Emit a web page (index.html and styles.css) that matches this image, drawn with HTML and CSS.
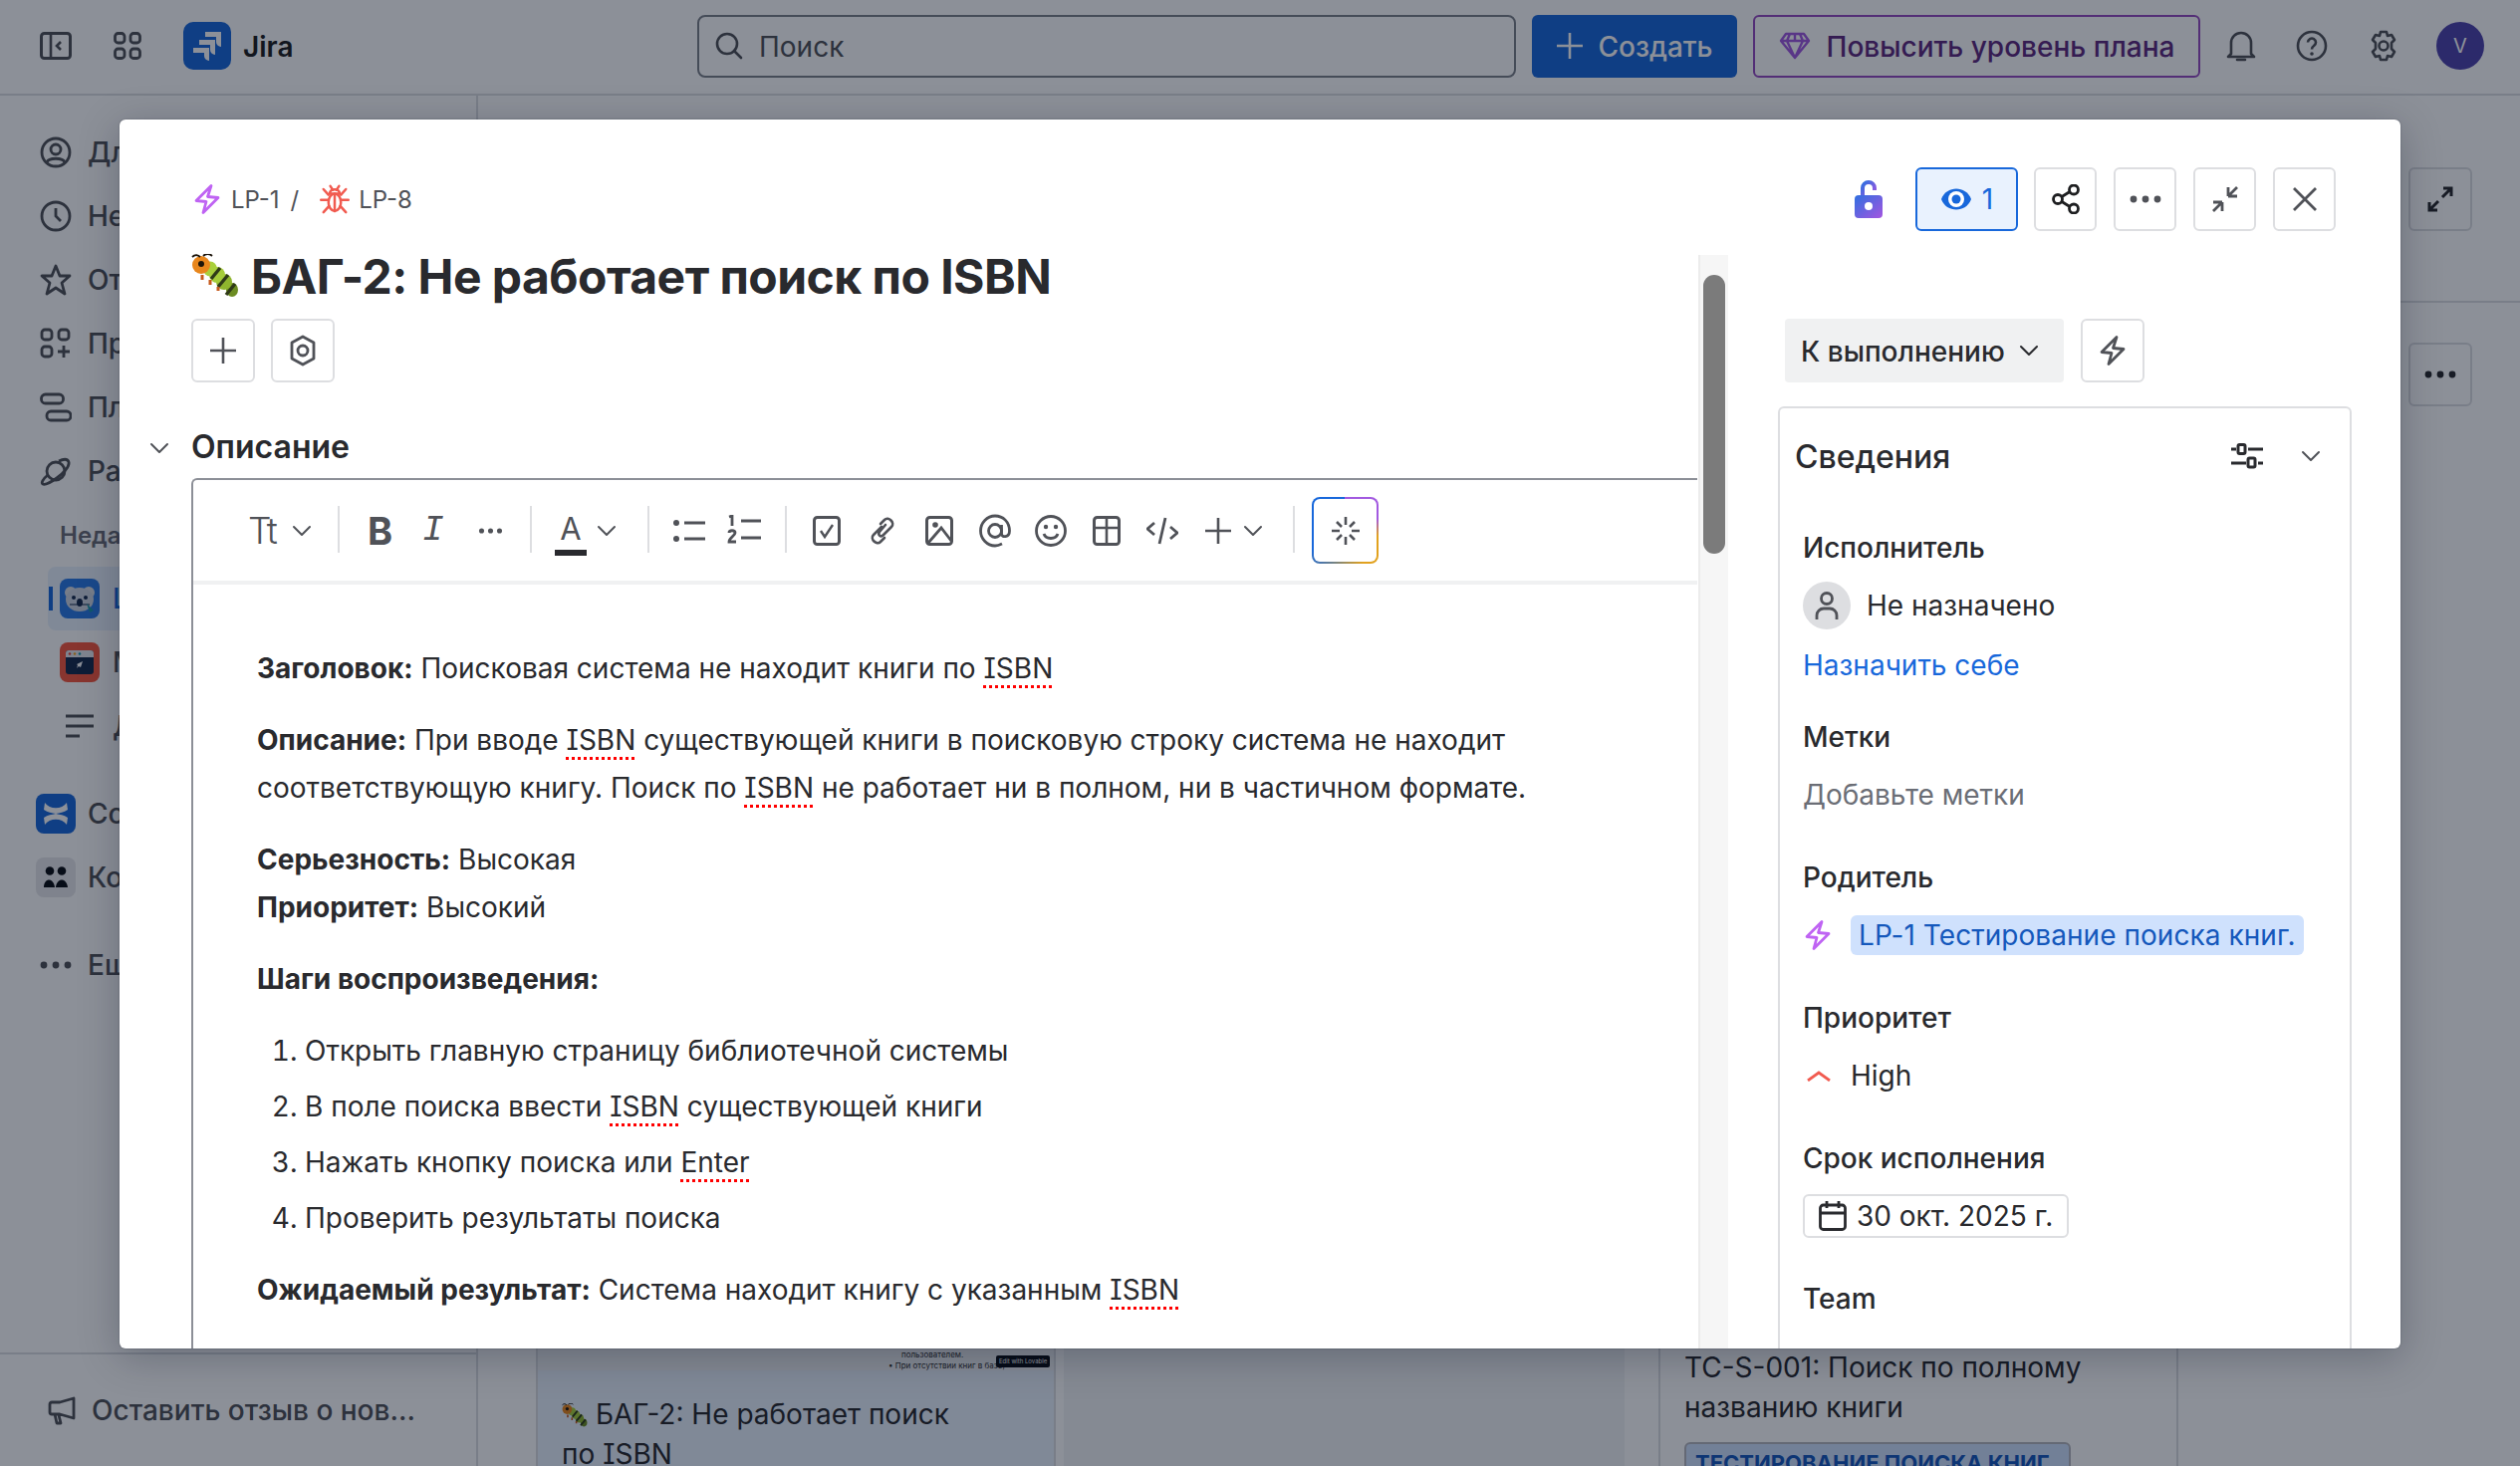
FILE: index.html
```html
<!DOCTYPE html>
<html lang="ru">
<head>
<meta charset="utf-8">
<title>Jira</title>
<link rel="stylesheet" href="styles.css">
</head>
<body>
<svg class="defs" width="0" height="0" aria-hidden="true">
  <defs>
    <symbol id="bolt" viewBox="0 0 26 32"><path d="M17 2.500 13.500 13.500 24 14.500 9 29.500 12 18.500 2 17.500z" fill="none" stroke="currentColor" stroke-width="2.800" stroke-linejoin="round"/></symbol>
    <symbol id="chev" viewBox="0 0 20 12"><path d="M2 2l8 8 8-8" fill="none" stroke="currentColor" stroke-width="2" stroke-linecap="round" stroke-linejoin="round"/></symbol>
    <symbol id="plus" viewBox="0 0 28 28"><path d="M14 1v26M1 14h26" fill="none" stroke="currentColor" stroke-width="2.600"/></symbol>
    <symbol id="dots" viewBox="0 0 32 8"><circle cx="4" cy="4" r="3.400" fill="currentColor"/><circle cx="16" cy="4" r="3.400" fill="currentColor"/><circle cx="28" cy="4" r="3.400" fill="currentColor"/></symbol>
    <symbol id="bug" viewBox="0 0 48 48">
      <g fill="none" stroke="currentColor" stroke-width="4" stroke-linecap="round" stroke-linejoin="round">
        <path d="M17 3l4 6M31 3l-4 6"/>
        <path d="M16 15c0-9 16-9 16 0z"/>
        <ellipse cx="24" cy="29" rx="10" ry="14"/>
        <path d="M24 15v28"/>
        <path d="M14 25H2M34 25h12M15 35L6 45M33 35l9 10M14 17L6 8M34 17l8-9"/>
      </g>
    </symbol>
    <symbol id="caterpillar" viewBox="0 0 48 44">
      <ellipse cx="41" cy="36" rx="6" ry="7" fill="#6c8c22"/>
      <ellipse cx="33" cy="28" rx="8" ry="8" fill="#8fb52e"/>
      <ellipse cx="26" cy="21" rx="8" ry="8" fill="#a5cc3a"/>
      <ellipse cx="19" cy="15" rx="7" ry="7.500" fill="#a9d03c"/>
      <path d="M37 21L27 33M29 14L20 25M44 30L35 41" stroke="#2f3a18" stroke-width="3.400"/>
      <circle cx="10" cy="11" r="9" fill="#e8861c"/>
      <circle cx="10" cy="10" r="3" fill="#1c140a"/>
      <path d="M1 3c3-3 6-2 8 0M12 2c3-3 7-2 9 0" fill="none" stroke="#1c140a" stroke-width="1.800"/>
      <path d="M11 21v5M19 26v5M27 33v4" stroke="#c65a1c" stroke-width="3"/>
    </symbol>
  </defs>
</svg>

<div class="app">
  <header class="topbar">
    <button class="tb-icon"><svg width="32" height="28" viewBox="0 0 32 28"><rect x="1.500" y="1.500" width="29" height="25" rx="3" fill="none" stroke="currentColor" stroke-width="3"/><path d="M11 2v24M21 10l-4 4 4 4" fill="none" stroke="currentColor" stroke-width="2.600"/></svg></button>
    <button class="tb-icon tb-apps"><svg width="28" height="28" viewBox="0 0 28 28"><g fill="none" stroke="currentColor" stroke-width="2.800"><rect x="1.500" y="1.500" width="9.500" height="9.500" rx="3"/><rect x="17" y="1.500" width="9.500" height="9.500" rx="3"/><rect x="1.500" y="17" width="9.500" height="9.500" rx="3"/><rect x="17" y="17" width="9.500" height="9.500" rx="3"/></g></svg></button>
    <div class="logo-box">
      <svg width="30" height="30" viewBox="0 0 30 30"><path d="M13 1h16v15a5 5 0 0 1-5-5V6H13z M7 9h16v15a5 5 0 0 1-5-5v-5H7z M1 17h16v13a5 5 0 0 1-5-5v-3H1z" fill="#fff"/></svg>
    </div>
    <span class="logo-text">Jira</span>
    <div class="search">
      <svg width="28" height="28" viewBox="0 0 28 28"><circle cx="12" cy="12" r="10" fill="none" stroke="currentColor" stroke-width="2.600"/><path d="M19 19l7 7" stroke="currentColor" stroke-width="2.600" stroke-linecap="round"/></svg>
      <span>Поиск</span>
    </div>
    <button class="create"><svg class="ic-plus" width="28" height="28"><use href="#plus"/></svg><span>Создать</span></button>
    <button class="upgrade"><svg width="32" height="28" viewBox="0 0 32 28"><path d="M7 2h18l5 7-14 17L2 9zM2 9h28M11 2l-3 7 8 17 8-17-3-7M16 2v7" fill="none" stroke="#a259e0" stroke-width="2.400" stroke-linejoin="round"/></svg><span>Повысить уровень плана</span></button>
    <div class="tb-right">
      <svg width="30" height="34" viewBox="0 0 30 34"><path d="M5 25V14a10 10 0 0 1 20 0v11l3 3H2zM11 31h8" fill="none" stroke="currentColor" stroke-width="2.600" stroke-linejoin="round" stroke-linecap="round"/></svg>
      <svg width="32" height="32" viewBox="0 0 32 32"><circle cx="16" cy="16" r="14" fill="none" stroke="currentColor" stroke-width="2.600"/><path d="M12 12.500a4 4 0 1 1 6 3.500c-1.500 1-2 1.500-2 3.500" fill="none" stroke="currentColor" stroke-width="2.600"/><circle cx="16" cy="24" r="1.800" fill="currentColor"/></svg>
      <svg width="32" height="32" viewBox="0 0 32 32"><path d="M13 2h6l1 4 4-1 3 5-3 3v6l3 3-3 5-4-1-1 4h-6l-1-4-4 1-3-5 3-3v-6L5 10l3-5 4 1z" fill="none" stroke="currentColor" stroke-width="2.600" stroke-linejoin="round"/><circle cx="16" cy="16" r="4.500" fill="none" stroke="currentColor" stroke-width="2.600"/></svg>
      <div class="avatar">V</div>
    </div>
  </header>

  <div class="body">
    <aside class="sidebar">
      <nav class="nav">
        <a class="nav-row"><svg width="32" height="32" viewBox="0 0 32 32"><g fill="none" stroke="currentColor" stroke-width="2.800"><circle cx="16" cy="16" r="14"/><circle cx="16" cy="13" r="5"/><path d="M7 26c2-5 16-5 18 0"/></g></svg><span>Дл</span></a>
        <a class="nav-row"><svg width="32" height="32" viewBox="0 0 32 32"><g fill="none" stroke="currentColor" stroke-width="2.800"><circle cx="16" cy="16" r="14"/><path d="M16 8v8l5 5"/></g></svg><span>Не</span></a>
        <a class="nav-row"><svg width="32" height="32" viewBox="0 0 32 32"><path d="M16 2l4 10h10l-8 7 3 11-9-6-9 6 3-11-8-7h10z" fill="none" stroke="currentColor" stroke-width="2.800" stroke-linejoin="round"/></svg><span>От</span></a>
        <a class="nav-row"><svg width="32" height="32" viewBox="0 0 32 32"><g fill="none" stroke="currentColor" stroke-width="2.800"><rect x="2" y="2" width="10" height="10" rx="3"/><rect x="19" y="2" width="10" height="10" rx="3"/><rect x="2" y="19" width="10" height="10" rx="3"/><path d="M24 18v12M18 24h12"/></g></svg><span>Пр</span></a>
        <a class="nav-row"><svg width="32" height="32" viewBox="0 0 32 32"><g fill="none" stroke="currentColor" stroke-width="2.800"><rect x="1.500" y="3" width="22" height="9" rx="4"/><rect x="7" y="20" width="24" height="9" rx="4"/></g></svg><span>Пл</span></a>
        <a class="nav-row"><svg width="32" height="32" viewBox="0 0 32 32"><g fill="none" stroke="currentColor" stroke-width="2.800"><circle cx="16" cy="16" r="9"/><path d="M8 20C3 24 1 28 3 29s7-1 14-6 13-12 12-16-6-3-10-1"/></g></svg><span>Ра</span></a>
        <div class="nav-head"><span>Неда</span></div>
        <a class="nav-row nav-project nav-active"><span class="mark"></span><span class="proj-icon proj-koala"><svg width="40" height="40" viewBox="0 0 40 40"><circle cx="11" cy="14" r="6" fill="#d9dde4"/><circle cx="29" cy="14" r="6" fill="#d9dde4"/><ellipse cx="20" cy="21" rx="14" ry="12" fill="#cdd5e2"/><circle cx="14" cy="19" r="2" fill="#172b4d"/><circle cx="26" cy="19" r="2" fill="#172b4d"/><ellipse cx="20" cy="24" rx="3" ry="4" fill="#172b4d"/><path d="M10 26h20" stroke="#172b4d"/><path d="M27 25l7 7-4 2z" fill="#1d9aaa"/></svg></span><span>L</span></a>
        <a class="nav-row nav-project"><span class="proj-icon proj-rocket"><svg width="28" height="24" viewBox="0 0 28 24"><rect width="28" height="24" rx="3" fill="#172b4d"/><path d="M0 3a3 3 0 0 1 3-3h22a3 3 0 0 1 3 3v4H0z" fill="#e8e9ee"/><circle cx="4" cy="3.500" r="1.300" fill="#e2483d"/><circle cx="9" cy="3.500" r="1.300" fill="#f5a623"/><circle cx="14" cy="3.500" r="1.300" fill="#1d9aaa"/><path d="M17 11l-2 6-2-1-2 2 1-3-1-1z" fill="#fff"/></svg></span><span>М</span></a>
        <a class="nav-row nav-project"><span class="proj-lines"><svg width="28" height="24" viewBox="0 0 28 24"><path d="M0 2h28M0 12h28M0 22h14" stroke="currentColor" stroke-width="2.800"/></svg></span><span>Д</span></a>
        <a class="nav-row nav-app nav-conf"><span class="app-icon app-conf"><svg width="28" height="28" viewBox="0 0 28 28"><path d="M3 3c5 7 17 7 22 0l1 7c-4 3-8 3-12 4-4-1-8-1-12-4zM3 25c5-7 17-7 22 0l1-7c-4-3-8-3-12-4-4 1-8 1-12 4z" fill="#fff"/></svg></span><span>Со</span></a>
        <a class="nav-row nav-app nav-team"><span class="app-icon app-team"><svg width="26" height="22" viewBox="0 0 26 22"><circle cx="7" cy="4.500" r="4.300"/><circle cx="19" cy="4.500" r="4.300"/><path d="M1 21c0-10 10-10 11 0zM13 21c1-10 11-10 12 0z"/></svg></span><span>Ко</span></a>
        <a class="nav-row nav-more"><svg class="more-dots" width="32" height="8"><use href="#dots"/></svg><span>Ещ</span></a>
      </nav>
      <div class="feedback">
        <svg width="28" height="30" viewBox="0 0 28 30"><path d="M26 3v20L12 19H4a2 2 0 0 1-2-2V9a2 2 0 0 1 2-2h8zM7 19l2 9h4l-2-8" fill="none" stroke="currentColor" stroke-width="2.800" stroke-linejoin="round"/></svg>
        <span>Оставить отзыв о нов...</span>
      </div>
    </aside>

    <main class="board">
      <div class="board-head">
        <button class="ghost-btn"><svg width="28" height="28" viewBox="0 0 28 28"><path d="M17 3h8v8M25 3l-9 9M11 25H3v-8M3 25l9-9" fill="none" stroke="currentColor" stroke-width="3"/></svg></button>
      </div>
      <div class="board-sub">
        <button class="ghost-btn"><svg width="32" height="8"><use href="#dots"/></svg></button>
      </div>
      <div class="columns">
        <section class="column">
          <div class="thumb">
            <span class="thumb-text t1">пользователем.</span>
            <span class="thumb-text t2">• При отсутствии книг в базе,</span>
            <span class="badge">Edit with Lovable</span>
          </div>
          <div class="card card-sel"><svg class="emoji-sm" width="26" height="24"><use href="#caterpillar"/></svg> БАГ-2: Не работает поиск<br>по ISBN</div>
        </section>
        <section class="column column-empty"></section>
        <section class="column">
          <div class="card card-plain">TC-S-001: Поиск по полному названию книги
            <div class="epic">ТЕСТИРОВАНИЕ ПОИСКА КНИГ.</div>
          </div>
        </section>
      </div>
    </main>
  </div>
</div>

<div class="blanket"></div>

<div class="modal">
  <div class="modal-left">
    <div class="crumbs">
      <svg class="c-purple" width="26" height="32"><use href="#bolt"/></svg>
      <span class="crumb-1">LP-1</span><span class="slash">/</span>
      <svg class="c-red bug" width="30" height="30"><use href="#bug"/></svg>
      <span class="crumb-2">LP-8</span>
    </div>
    <h1 class="title"><svg class="emoji" width="48" height="44"><use href="#caterpillar"/></svg>БАГ-2: Не работает поиск по ISBN</h1>
    <div class="title-actions">
      <button class="sq"><svg width="28" height="28"><use href="#plus"/></svg></button>
      <button class="sq"><svg width="28" height="32" viewBox="0 0 28 32"><path d="M14 2l11 6v16l-11 6-11-6V8z" fill="none" stroke="currentColor" stroke-width="2.800" stroke-linejoin="round"/><circle cx="14" cy="16" r="5" fill="none" stroke="currentColor" stroke-width="2.800"/></svg></button>
    </div>
    <div class="section-head">
      <svg class="sec-chev" width="20" height="12"><use href="#chev"/></svg>
      <h2>Описание</h2>
    </div>
    <div class="editor">
      <div class="toolbar">
        <span class="tt">Tt</span>
        <svg class="chev" width="20" height="12"><use href="#chev"/></svg>
        <i class="sep s1"></i>
        <b class="tool-b">B</b>
        <em class="tool-i">I</em>
        <svg class="tool-dots" width="26" height="6"><use href="#dots"/></svg>
        <i class="sep s2"></i>
        <span class="tool-a">A</span>
        <svg class="chev" width="20" height="12"><use href="#chev"/></svg>
        <i class="sep s3"></i>
        <svg class="t-bullets" width="32" height="24" viewBox="0 0 32 24"><circle cx="3" cy="4" r="3" fill="currentColor"/><circle cx="3" cy="20" r="3" fill="currentColor"/><path d="M11 4h21M11 20h21" stroke="currentColor" stroke-width="3"/></svg>
        <svg class="t-nums" width="34" height="32" viewBox="0 0 34 32"><path d="M2 2l3-1v10M2 18c0-3 6-3 6 0 0 3-6 5-6 9h7M14 6h20M14 23h20" fill="none" stroke="currentColor" stroke-width="2.800"/></svg>
        <i class="sep s4"></i>
        <svg class="t-check" width="28" height="30" viewBox="0 0 28 30"><rect x="1.500" y="1.500" width="25" height="27" rx="3" fill="none" stroke="currentColor" stroke-width="3"/><path d="M8 15l4 6 8-12" fill="none" stroke="currentColor" stroke-width="2.400"/></svg>
        <svg class="t-link" width="30" height="30" viewBox="0 0 30 30"><path d="M13 8l4-4c4-4 11 3 7 7l-8 8c-3 3-6 0-4-3l6-7M17 22l-4 4c-4 4-11-3-7-7l8-8" fill="none" stroke="currentColor" stroke-width="2.600" stroke-linecap="round"/></svg>
        <svg class="t-image" width="28" height="30" viewBox="0 0 28 30"><rect x="1.500" y="1.500" width="25" height="27" rx="3" fill="none" stroke="currentColor" stroke-width="3"/><circle cx="10" cy="9" r="2.800" fill="currentColor"/><path d="M3 27l13-15 10 13" fill="none" stroke="currentColor" stroke-width="2.800"/></svg>
        <svg class="t-at" width="32" height="34" viewBox="0 0 32 34"><circle cx="16" cy="17" r="6.500" fill="none" stroke="currentColor" stroke-width="2.800"/><path d="M22.500 11v9c0 4 8 4 8-3C30.500 8 24 2 16 2 8 2 1.500 9 1.500 17S8 32 16 32c3 0 5-1 7-2" fill="none" stroke="currentColor" stroke-width="2.800"/></svg>
        <svg class="t-smile" width="32" height="34" viewBox="0 0 32 34"><circle cx="16" cy="17" r="14.500" fill="none" stroke="currentColor" stroke-width="2.800"/><circle cx="11" cy="13" r="2.200" fill="currentColor"/><circle cx="21" cy="13" r="2.200" fill="currentColor"/><path d="M9 20c2 6 12 6 14 0" fill="none" stroke="currentColor" stroke-width="2.800"/></svg>
        <svg class="t-table" width="28" height="30" viewBox="0 0 28 30"><rect x="1.500" y="1.500" width="25" height="27" rx="3" fill="none" stroke="currentColor" stroke-width="3"/><path d="M14 2v26M2 12h24" stroke="currentColor" stroke-width="2.600"/></svg>
        <svg class="t-code" width="32" height="30" viewBox="0 0 32 30"><path d="M8 7l-7 6 7 6M24 11l7 6-7 6M19 2l-6 26" fill="none" stroke="currentColor" stroke-width="2.800"/></svg>
        <svg class="t-plus" width="28" height="28"><use href="#plus"/></svg>
        <svg class="t-chev" width="20" height="12"><use href="#chev"/></svg>
        <i class="sep s5"></i>
        <button class="ai"><svg width="30" height="30" viewBox="0 0 30 30"><path d="M15 1v8M15 21v8M1 15h8M21 15h8M6 6l5 5M19 19l5 5M24 6l-5 5M11 19l-5 5" stroke="currentColor" stroke-width="2.600"/></svg></button>
      </div>
      <div class="doc">
        <p><strong>Заголовок:</strong> Поисковая система не находит книги по <u>ISBN</u></p>
        <p><strong>Описание:</strong> При вводе <u>ISBN</u> существующей книги в поисковую строку система не находит соответствующую книгу. Поиск по <u>ISBN</u> не работает ни в полном, ни в частичном формате.</p>
        <p><strong>Серьезность:</strong> Высокая<br><strong>Приоритет:</strong> Высокий</p>
        <p><strong>Шаги воспроизведения:</strong></p>
        <ol>
          <li>Открыть главную страницу библиотечной системы</li>
          <li>В поле поиска ввести <u>ISBN</u> существующей книги</li>
          <li>Нажать кнопку поиска или <u>Enter</u></li>
          <li>Проверить результаты поиска</li>
        </ol>
        <p><strong>Ожидаемый результат:</strong> Система находит книгу с указанным <u>ISBN</u></p>
      </div>
    </div>
  </div>

  <div class="scrolltrack"><div class="scrollthumb"></div></div>

  <div class="modal-right">
    <div class="status-row">
      <button class="status"><span>К выполнению</span><svg width="20" height="12"><use href="#chev"/></svg></button>
      <button class="sq"><svg width="26" height="32"><use href="#bolt"/></svg></button>
    </div>
    <div class="details">
      <div class="details-head">
        <h3>Сведения</h3>
        <svg class="d-sliders" width="32" height="26" viewBox="0 0 32 26"><g fill="none" stroke="currentColor" stroke-width="3"><path d="M0 6h5M17 6h15M0 20h15M27 20h5"/><rect x="7" y="1.500" width="7" height="9" rx="1.500"/><rect x="17" y="15" width="7" height="9" rx="1.500"/></g></svg>
        <svg class="d-chev" width="20" height="12"><use href="#chev"/></svg>
      </div>
      <div class="field f-assignee">
        <div class="label">Исполнитель</div>
        <div class="value"><span class="person"><svg width="24" height="30" viewBox="0 0 24 30"><g fill="none" stroke="#505258" stroke-width="2.800"><circle cx="12" cy="8" r="5.500"/><path d="M2 29v-4a7 7 0 0 1 7-7h6a7 7 0 0 1 7 7v4"/></g></svg></span>Не назначено</div>
        <a class="assign">Назначить себе</a>
      </div>
      <div class="field">
        <div class="label">Метки</div>
        <div class="value muted">Добавьте метки</div>
      </div>
      <div class="field">
        <div class="label">Родитель</div>
        <div class="value"><svg class="c-purple p-bolt" width="26" height="32"><use href="#bolt"/></svg><span class="chip">LP-1 Тестирование поиска книг.</span></div>
      </div>
      <div class="field">
        <div class="label">Приоритет</div>
        <div class="value"><svg class="prio" width="24" height="12" viewBox="0 0 24 12"><path d="M1 11l11-8 11 8" fill="none" stroke="#f15b50" stroke-width="2.800"/></svg>High</div>
      </div>
      <div class="field">
        <div class="label">Срок исполнения</div>
        <div class="value"><span class="date"><svg width="28" height="30" viewBox="0 0 28 30"><g fill="none" stroke="currentColor" stroke-width="2.800"><rect x="1.500" y="4" width="25" height="24.500" rx="3"/><path d="M1.500 12h25M8 0v7M20 0v7"/></g></svg>30 окт. 2025 г.</span></div>
      </div>
      <div class="field">
        <div class="label">Team</div>
      </div>
    </div>
  </div>

  <div class="modal-actions">
    <svg class="lock" width="28" height="38" viewBox="0 0 28 38"><defs><linearGradient id="lockg" x1="0" y1="0" x2="1" y2="1"><stop offset="0" stop-color="#2f6fe0"/><stop offset="1" stop-color="#a455e0"/></linearGradient></defs><path d="M8 16V8a6 6 0 0 1 12 0v2" fill="none" stroke="url(#lockg)" stroke-width="4"/><rect y="15" width="28" height="23" rx="4" fill="url(#lockg)"/><circle cx="14" cy="26" r="4" fill="#fff"/></svg>
    <button class="sq act sq-watch"><svg width="32" height="26" viewBox="0 0 32 26"><path d="M1 13C6-1 26-1 31 13 26 27 6 27 1 13z" fill="#1868db"/><circle cx="16" cy="13" r="8" fill="#fff"/><circle cx="16" cy="13" r="4.500" fill="#1868db"/></svg><span>1</span></button>
    <button class="sq act sq-dark"><svg width="28" height="30" viewBox="0 0 28 30"><g fill="none" stroke="currentColor" stroke-width="2.800"><circle cx="6" cy="15" r="4.500"/><circle cx="22" cy="5.500" r="4.500"/><circle cx="22" cy="24.500" r="4.500"/><path d="M10 12.500l8-5M10 17.500l8 5"/></g></svg></button>
    <button class="sq act"><svg width="34" height="8"><use href="#dots"/></svg></button>
    <button class="sq act"><svg width="30" height="30" viewBox="0 0 30 30"><path d="M18 12V3M18 12h9M18 12l9-9M12 18v9M12 18H3M12 18l-9 9" fill="none" stroke="currentColor" stroke-width="2.800"/></svg></button>
    <button class="sq act"><svg width="24" height="24" viewBox="0 0 24 24"><path d="M1 1l22 22M23 1L1 23" stroke="currentColor" stroke-width="2.800"/></svg></button>
  </div>
</div>
</body>
</html>
```

FILE: styles.css
```css
* { box-sizing: border-box; }
html, body { margin: 0; height: 100%; overflow: hidden; }
body { width: 2530px; height: 1472px; font-family: Inter, "Noto Sans", sans-serif; font-feature-settings: "cv08"; color: #292a2e; background: #fff; position: relative; font-size: 28px; overflow: hidden; }
.defs { position: absolute; }
button { font: inherit; font-feature-settings: inherit; border: 0; background: none; padding: 0; color: inherit; }
svg { display: block; flex: none; }
p, h1, h2, h3 { margin: 0; }

.app { width: 2530px; height: 1472px; display: flex; flex-direction: column; color: #292a2e; overflow: hidden; }
.topbar { height: 96px; flex: none; display: flex; align-items: center; padding: 0 0 2px 40px; border-bottom: 2px solid #dddee1; color: #505258; }
.tb-icon { display: flex; }
.tb-apps { margin-left: 42px; }
.logo-box { margin-left: 42px; width: 48px; height: 48px; border-radius: 10px; background: #1868db; display: flex; align-items: center; justify-content: center; }
.logo-text { margin-left: 12px; font-size: 28px; font-weight: 600; color: #1e1f21; width: 51px; padding-top: 2px; }
.search { margin-left: 405px; width: 822px; height: 63px; border: 2px solid #7d818a; border-radius: 8px; display: flex; align-items: center; padding-left: 16px; gap: 16px; color: #505258; font-size: 28px; }
.search span { padding-top: 2px; }
.create { margin-left: 16px; width: 206px; height: 63px; background: #1868db; color: #fff; border-radius: 6px; display: flex; align-items: center; justify-content: center; gap: 14px; font-weight: 500; font-size: 28px; }
.create span, .upgrade span { padding-top: 2px; }
.ic-plus { width: 28px; height: 28px; }
.upgrade { margin-left: 16px; width: 449px; height: 63px; border: 2px solid #964ac0; border-radius: 6px; display: flex; align-items: center; justify-content: center; gap: 16px; color: #5e2a7e; font-weight: 500; font-size: 28px; white-space: nowrap; }
.tb-right { margin-left: 26px; display: flex; align-items: center; gap: 40px; }
.avatar { width: 48px; height: 48px; border-radius: 50%; background: #4f43ad; color: #fff; font-size: 20px; display: flex; align-items: center; justify-content: center; margin-left: -3px; }

.body { flex: 1; display: flex; min-height: 0; }
.sidebar { width: 480px; flex: none; border-right: 2px solid #dddee1; display: flex; flex-direction: column; color: #505258; }
.nav { flex: 1; padding: 25px 0 0 40px; }
.nav-row { display: flex; align-items: center; gap: 16px; height: 64px; font-weight: 500; font-size: 28px; color: #505258; white-space: nowrap; }
.nav-head { font-size: 24px; font-weight: 600; margin: 0 0 0 20px; height: 64px; display: flex; align-items: center; color: #6b6e76; }
.nav-project { margin-left: 20px; padding-left: 0; gap: 13px; position: relative; }
.nav-active { margin-left: 8px; padding-left: 12px; background: #e9f2fe; border-radius: 8px; color: #1868db; height: 64px; }
.mark { position: absolute; left: 1px; top: 20px; height: 24px; width: 4px; background: #1868db; }
.proj-icon { width: 40px; height: 40px; border-radius: 8px; display: flex; align-items: center; justify-content: center; overflow: hidden; flex: none; }
.proj-koala { background: #2c7be5; }
.proj-rocket { background: #f8583e; }
.proj-lines { width: 40px; height: 40px; display: flex; align-items: center; justify-content: center; color: #505258; flex: none; }
.nav-app { margin-left: -4px; gap: 12px; }
.nav-conf { margin-top: 24px; }
.app-icon { width: 40px; height: 40px; border-radius: 8px; display: flex; align-items: center; justify-content: center; flex: none; }
.app-conf { background: #1868db; }
.app-team { background: #e8e8ea; color: #0b0d13; }
.app-team svg { fill: currentColor; }
.nav-more { margin-top: 24px; }
.more-dots { color: #505258; }
.feedback { flex: none; height: 114px; border-top: 2px solid #dddee1; display: flex; align-items: center; padding: 0 0 0 48px; gap: 16px; font-weight: 500; font-size: 28px; color: #505258; }

.board { flex: 1; position: relative; min-width: 0; }
.board-head { height: 208px; border-bottom: 2px solid #dddee1; display: flex; justify-content: flex-end; padding: 72px 48px 0 0; }
.board-sub { display: flex; justify-content: flex-end; padding: 40px 48px 0 0; height: 1000px; }
.ghost-btn { width: 64px; height: 64px; border: 2px solid #dddee1; border-radius: 6px; display: flex; align-items: center; justify-content: center; color: #292a2e; }
.columns { position: absolute; left: 58px; top: 1200px; height: 176px; display: flex; overflow: hidden; }
.column { width: 522px; height: 176px; border: solid #dddee1; border-width: 0 2px; background: #f8f8f8; overflow: hidden; flex: none; }
.column-empty { width: 563px; margin: 0 34px 0 8px; border: 0; background: #f3f4f5; }
.thumb { height: 80px; position: relative; background: #f1f2f4; }
.thumb-text { position: absolute; left: 365px; font-size: 8px; line-height: 10px; color: #333; white-space: nowrap; }
.t1 { top: 59px; }
.t2 { top: 70px; left: 352px; }
.badge { position: absolute; right: 4px; top: 65px; background: #0b0d13; color: #fff; font-size: 6px; line-height: 8px; padding: 2px 3px; border-radius: 2px; white-space: nowrap; width: 54px; }
.card { padding: 24px 24px; font-size: 28px; line-height: 40px; color: #292a2e; }
.card-sel { background: #e9f2fe; height: 96px; overflow: hidden; }
.emoji-sm { display: inline-block; vertical-align: -3px; }
.card-plain { padding-top: 57px; background: #fff; height: 176px; overflow: hidden; }
.epic { margin-top: 15px; height: 40px; width: 388px; background: #cfe1fd; border: 2px solid #b5b8bf; border-radius: 6px; color: #1558bc; font-size: 22px; font-weight: 700; white-space: nowrap; padding: 0 9px; line-height: 38px; }

.blanket { position: absolute; inset: 0; background: rgba(5, 12, 31, .46); }

.modal { position: absolute; left: 120px; top: 120px; width: 2290px; height: 1234px; background: #fff; border-radius: 6px; box-shadow: 0 8px 40px rgba(5, 12, 31, .26), 0 0 2px rgba(5, 12, 31, .3); display: flex; overflow: hidden; }
.modal-left { width: 1584px; flex: none; padding: 64px 0 0 72px; position: relative; }
.crumbs { display: flex; align-items: center; height: 32px; font-size: 24px; color: #505258; padding-left: 3px; }
.crumb-1 { margin-left: 11px; }
.slash { margin-left: 11px; }
.bug { margin-left: 21px; }
.crumb-2 { margin-left: 9px; }
.c-purple { color: #bf63f3; }
.c-red { color: #f15b50; }
.title { display: flex; align-items: center; gap: 12px; margin-top: 33px; height: 56px; font-size: 48px; font-weight: 700; color: #292a2e; white-space: nowrap; letter-spacing: -.54px; font-feature-settings: normal; }
.title-actions { display: flex; gap: 16px; margin-top: 15px; }
.sq { width: 64px; height: 64px; border: 2px solid #dddee1; border-radius: 6px; display: flex; align-items: center; justify-content: center; color: #505258; background: #fff; flex: none; }
.act { width: 63px; }
.sq-dark { color: #1e1f21; }
.sq-watch { width: 103px; background: #e9f2fe; border-color: #1868db; color: #1868db; gap: 10px; font-size: 28px; margin-right: -1px; }
.section-head { position: relative; margin-top: 44px; height: 40px; display: flex; align-items: center; }
.section-head h2 { font-size: 32px; font-weight: 600; color: #292a2e; }
.sec-chev { position: absolute; left: -42px; top: 16px; color: #505258; }
.editor { margin-top: 12px; border: solid #8c8f97; border-width: 2px 0 0 2px; border-radius: 6px 0 0 0; height: 900px; }

.toolbar { height: 105px; border-bottom: 4px solid #f0f1f2; display: flex; align-items: center; color: #505258; padding-left: 55px; }
.tt { font-size: 37px; color: #505258; width: 34px; font-weight: 300; letter-spacing: -1px; white-space: nowrap; line-height: 40px; }
.chev { margin-left: 10px; }
.sep { width: 2px; height: 47px; background: #dddee1; flex: none; margin-top: -2px; }
.s1 { margin-left: 26px; }
.tool-b { margin-left: 28px; width: 24px; font-size: 38px; font-weight: 700; line-height: 40px; }
.tool-i { margin-left: 31px; width: 18px; font-family: "Liberation Mono", monospace; font-size: 36px; line-height: 40px; font-style: italic; }
.tool-dots { margin-left: 38px; width: 25px; }
.s2 { margin-left: 27px; }
.tool-a { margin-left: 23px; width: 32px; height: 46px; font-size: 31px; line-height: 38px; text-align: center; border-bottom: 6px solid #292a2e; margin-top: 4px; }
.s3 { margin-left: 31px; }
.t-bullets { margin-left: 24px; }
.t-nums { margin-left: 22px; }
.s4 { margin-left: 24px; }
.t-check { margin-left: 26px; }
.t-link { margin-left: 27px; }
.t-image { margin-left: 28px; }
.t-at { margin-left: 26px; }
.t-smile { margin-left: 24px; }
.t-table { margin-left: 26px; }
.t-code { margin-left: 26px; }
.t-plus { margin-left: 26px; }
.t-chev { margin-left: 11px; }
.s5 { margin-left: 30px; }
.ai { margin-left: 17px; width: 67px; height: 67px; border: 2px solid transparent; border-radius: 8px; display: flex; align-items: center; justify-content: center; color: #505258; background: linear-gradient(#fff, #fff) padding-box, conic-gradient(from 0deg, #a259e0 0deg, #a259e0 70deg, #e2a21e 100deg, #e2a21e 150deg, #1868db 240deg, #1868db 360deg) border-box; }

.doc { padding: 60px 60px 0 64px; font-size: 28px; line-height: 48px; color: #292a2e; }
.doc p { margin: 0 0 24px; }
.doc strong { font-weight: 700; }
.doc u { text-decoration: underline dotted #f00; text-decoration-thickness: 3px; text-underline-offset: 7px; }
.doc ol { margin: 0 0 24px; padding-left: 48px; }
.doc li { margin-bottom: 8px; }
.doc li:last-child { margin-bottom: 0; }

.scrolltrack { position: absolute; left: 1585px; top: 136px; width: 30px; bottom: 0; background: #f6f6f6; border-left: 2px solid #ececec; padding: 20px 3px 0 3px; }
.scrollthumb { width: 22px; height: 280px; border-radius: 11px; background: #7b7b7b; }

.modal-right { position: absolute; left: 1665px; top: 200px; width: 576px; bottom: 0; display: flex; flex-direction: column; }
.status-row { display: flex; gap: 17px; padding-left: 7px; height: 64px; }
.status { width: 280px; height: 64px; background: #f0f1f2; border-radius: 4px; display: flex; align-items: center; gap: 14px; padding-left: 16px; font-weight: 500; font-size: 28px; color: #292a2e; white-space: nowrap; }
.status span { padding-top: 2px; }
.details { margin-top: 24px; flex: 1; border: solid #dddee1; border-width: 2px 2px 0; border-radius: 6px 6px 0 0; padding: 0 16px 0 23px; }
.details-head { height: 96px; display: flex; align-items: center; margin-left: -8px; }
.details-head h3 { font-size: 32px; font-weight: 500; color: #292a2e; flex: 1; }
.d-sliders { margin-right: 38px; color: #292a2e; }
.d-chev { margin-right: 13px; color: #505258; }
.field { margin-bottom: 39px; }
.f-assignee { margin-top: 24px; margin-bottom: 32px; }
.label { height: 40px; line-height: 40px; font-weight: 500; font-size: 28px; color: #292a2e; }
.value { display: flex; align-items: center; min-height: 48px; margin-top: 14px; font-size: 28px; color: #292a2e; line-height: 48px; }
.person { width: 48px; height: 48px; border-radius: 50%; background: #dddee1; display: flex; align-items: center; justify-content: center; margin-right: 16px; flex: none; }
.assign { display: block; margin-top: 16px; height: 40px; line-height: 40px; color: #1868db; }
.muted { color: #6b6e76; }
.p-bolt { margin: 0 20px 0 2px; }
.chip { background: #cfe1fd; border-radius: 6px; padding: 0 8px; height: 40px; line-height: 40px; color: #1558bc; white-space: nowrap; letter-spacing: .05px; }
.prio { margin: 0 20px 0 4px; }
.date { display: inline-flex; align-items: center; gap: 10px; height: 44px; width: 267px; border: 2px solid #dddee1; border-radius: 6px; padding-left: 14px; white-space: nowrap; }

.modal-actions { position: absolute; right: 65px; top: 48px; display: flex; align-items: center; gap: 17px; }
.lock { margin-right: 16px; }
```
